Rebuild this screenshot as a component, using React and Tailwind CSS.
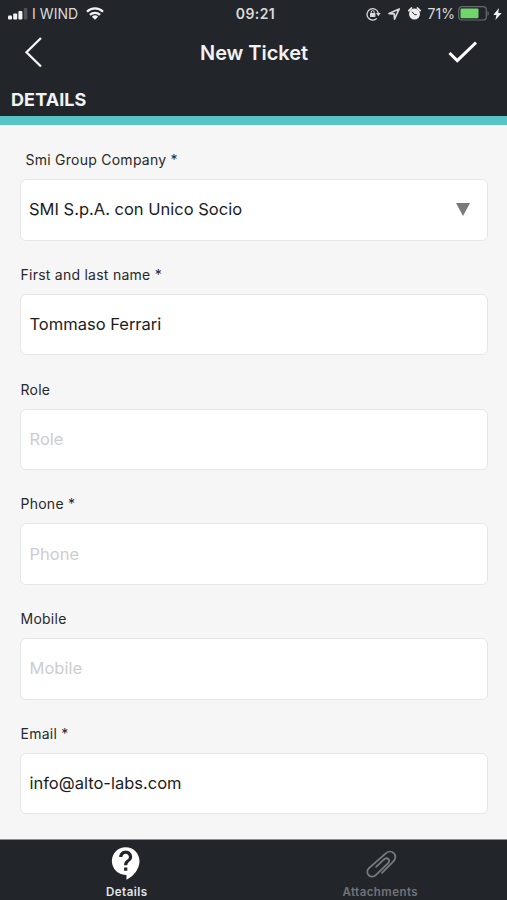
import React, { useState } from "react";
import { MdContactSupport } from "react-icons/md";

const fields = [
  { name: "fullname", label: "First and last name *", value: "Tommaso Ferrari" },
  { name: "role", label: "Role", placeholder: "Role" },
  { name: "phone", label: "Phone *", placeholder: "Phone" },
  { name: "mobile", label: "Mobile", placeholder: "Mobile" },
  { name: "email", label: "Email *", value: "info@alto-labs.com" },
];

function StatusBar() {
  return (
    <div className="flex h-[27px] items-center pl-2 pr-[5px] text-[14px] text-[#d9dadc]">
      <div className="flex flex-1 items-center">
        <svg width="20" height="12" viewBox="0 0 20 12" fill="#f4f4f5">
          <rect x="0" y="7.5" width="4" height="4" rx="1" />
          <rect x="5.2" y="5.5" width="4" height="6" rx="1" />
          <rect x="10.4" y="3" width="4" height="8.5" rx="1" />
          <rect x="15.8" y="0" width="3.6" height="11.5" rx="1" fill="#4f5256" />
        </svg>
        <span className="ml-1 tracking-[0.05px]">I WIND</span>
        <svg className="ml-2" width="18" height="13" viewBox="0 0 18 13" fill="none" stroke="#f4f4f5" strokeWidth="2.3">
          <path d="M1 4.7a11.4 11.4 0 0 1 16 0" />
          <path d="M4 7.9a7.2 7.2 0 0 1 10 0" />
          <path d="M9 12.8 5.9 9.7a4.5 4.5 0 0 1 6.2 0z" fill="#f4f4f5" stroke="none" />
        </svg>
      </div>
      <span className="pl-px font-semibold tracking-[0.4px]">09:21</span>
      <div className="flex flex-1 items-center justify-end">
        <svg width="15" height="14" viewBox="0 0 15 14" fill="none" stroke="#d9dadc" strokeWidth="1.3">
          <path d="M10.8 11.4A5.7 5.7 0 1 1 12.3 6" />
          <path d="M10 6h4.6l-2.2 3.2z" fill="#d9dadc" stroke="none" />
          <rect x="4" y="6" width="5.4" height="4" rx=".5" fill="#d9dadc" stroke="none" />
          <path d="M5.2 6.2V5.1a1.5 1.5 0 0 1 3 0v1.1" strokeWidth="1" />
        </svg>
        <svg className="ml-[7px]" width="12" height="12" viewBox="0 0 12 12" fill="none" stroke="#d9dadc" strokeWidth="1.6" strokeLinejoin="round">
          <path d="M11.2.9 1 5.6l5.2.3.3 5.2z" />
        </svg>
        <svg className="ml-2" width="13" height="13" viewBox="0 0 13 13">
          <circle cx="6.5" cy="7.1" r="5.5" fill="#eeeeef" />
          <path d="M.9 3.6 3.5 1.1M12.1 3.6 9.5 1.1" stroke="#eeeeef" strokeWidth="1.9" strokeLinecap="round" />
          <path d="M4 4.8l2.5 2.8h2.2" fill="none" stroke="#22262b" strokeWidth="1" />
        </svg>
        <span className="ml-[7px] tracking-[0.05px]">71%</span>
        <svg className="ml-[3px]" width="31" height="15" viewBox="0 0 31 15">
          <rect x=".7" y=".7" width="27.6" height="13.3" rx="3" fill="none" stroke="#686b6f" strokeWidth="1.2" />
          <rect x="2.5" y="2.5" width="18" height="9.8" rx="1" fill="#6fd66b" />
          <path d="M29.5 5v5q1.3-.8 1.3-2.5T29.5 5z" fill="#686b6f" />
        </svg>
        <svg className="ml-1" width="9" height="12" viewBox="0 0 9 12" fill="#f4f4f5">
          <path d="M6 0 .3 7h3.1L2.4 12 8.7 4.9H5.2z" />
        </svg>
      </div>
    </div>
  );
}

function Field({ label, name, value, placeholder }) {
  const [text, setText] = useState(value || "");

  return (
    <label className="flex h-[114.8px] flex-col">
      <span className="h-[34px] pl-[0.5px] pt-[5px] text-[14px] leading-5 tracking-[0.25px] text-[#28282a]">
        {label}
      </span>
      <input
        name={name}
        value={text}
        placeholder={placeholder}
        onChange={(e) => setText(e.target.value)}
        className="h-[61.5px] w-full rounded-[6px] border border-[#e6e6e6] bg-white pb-px pl-[8.5px] pr-2 text-[16.5px] text-[#1c1c1e] outline-none placeholder:text-[#cdcdcf]"
      />
    </label>
  );
}

export default function App() {
  return (
    <div className="flex h-[900px] w-[507px] flex-col overflow-hidden bg-[#f6f6f6] font-['Inter',sans-serif]">
      <header className="h-[116px] shrink-0 bg-[#22262b] text-[#f1f2f4]">
        <StatusBar />
        <div className="flex h-[50px] items-center justify-between pl-6 pr-[29px]">
          <button className="w-[30px]">
            <svg width="19" height="31" viewBox="0 0 19 31" fill="none" stroke="#f4f4f5" strokeWidth="2.3">
              <path d="M17 1 2.5 15.3 17 29.5" />
            </svg>
          </button>
          <h1 className="pl-[6px] pt-px text-[20px] font-semibold tracking-[-0.05px]">New Ticket</h1>
          <button className="w-[30px]">
            <svg width="30" height="22" viewBox="0 0 30 22" fill="none" stroke="#ffffff" strokeWidth="3.1">
              <path d="M1.5 12 9.3 19.5 28 1.5" />
            </svg>
          </button>
        </div>
        <h2 className="pl-[11px] pt-[11px] text-[18px] font-bold leading-6 tracking-[0.1px]">DETAILS</h2>
      </header>
      <div className="h-[9px] shrink-0 bg-[#58c4c7]" />

      <main className="min-h-0 flex-1 overflow-hidden pl-5 pr-[19px] pt-5">
        <div className="flex h-[114.8px] flex-col">
          <span className="h-[34px] pl-[5.5px] pt-[5px] text-[14px] leading-5 tracking-[0.25px] text-[#28282a]">
            Smi Group Company *
          </span>
          <button className="flex h-[61.5px] items-center justify-between rounded-[6px] border border-[#e6e6e6] bg-white pb-px pl-2 pr-[17px] text-[16.5px] text-[#1c1c1e]">
            SMI S.p.A. con Unico Socio
            <svg width="14" height="13" viewBox="0 0 14 13">
              <path d="M0 0h14L7 13z" fill="#7b7b7b" />
            </svg>
          </button>
        </div>
        {fields.map((field) => (
          <Field key={field.name} {...field} />
        ))}
      </main>

      <nav className="grid h-[61px] shrink-0 grid-cols-2 border-t border-[#8b8e90] bg-[#22262b] text-[11.5px] font-semibold tracking-[0.45px]">
        <button className="flex flex-col items-center justify-start pt-1 text-[#e4e5e7]">
          <MdContactSupport size={39} color="#ffffff" />
          <span className="-mt-px leading-5">Details</span>
        </button>
        <button className="flex flex-col items-center justify-start pt-1 text-[#707478]">
          <svg width="39" height="39" viewBox="-1.5 -1 39 39" fill="none" stroke="#787b7e" strokeWidth="1.8" strokeLinecap="round">
            <path d="M19.5 27.8 30.7 16.6c6-6.2-2-13.8-8-7.8L6.5 23.2c-4.8 5.2 2 11.4 7 6.6L25.4 18.4c3.4-3.4-.8-7-4.2-3.8l-7.6 7.2" />
          </svg>
          <span className="-mt-px leading-5">Attachments</span>
        </button>
      </nav>
    </div>
  );
}
